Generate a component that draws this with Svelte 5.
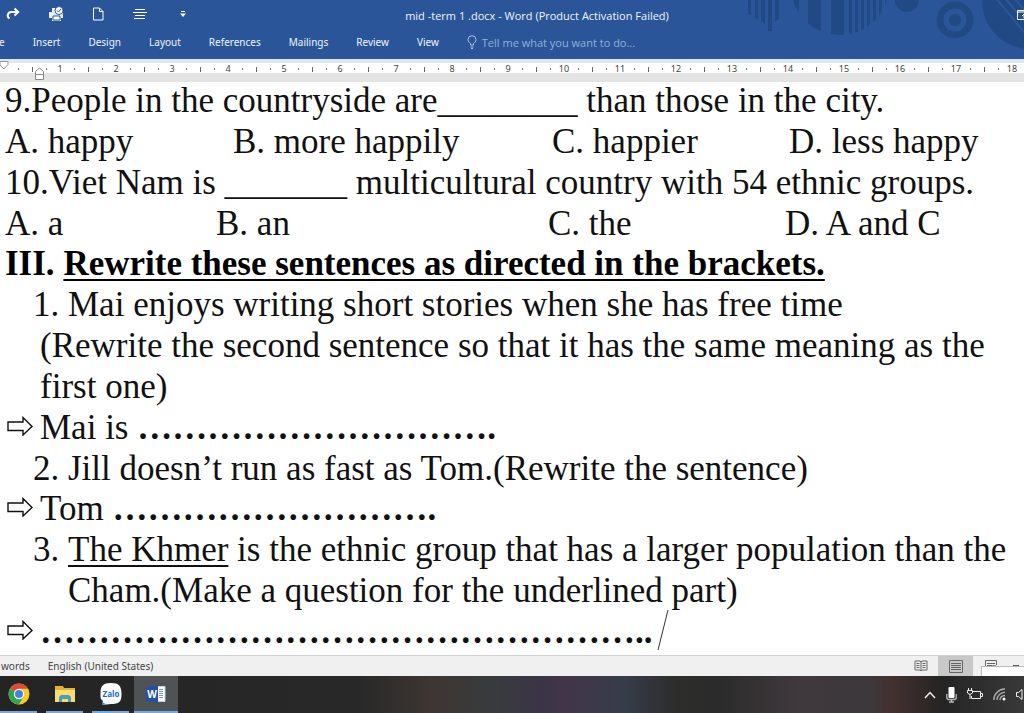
<script lang="ts">
    const tabs: string[] = ["e", "Insert", "Design", "Layout", "References", "Mailings", "Review", "View"];
    const running: string[] = ["Google Chrome", "File Explorer", "Zalo", "Word"];

    // quarter marks of the ruler: dot, bar, dot, number
    let marks: string[] = [];
    for (let i = 1; i <= 18; i++) {
        marks.push("dot", "bar", "dot", i.toString());
    }

    // dotted line to write an answer on
    const dots = (ellipses: number, periods: number): string => {
        return "…".repeat(ellipses) + ".".repeat(periods);
    }

    let search: string = "";
    let activeView: string = "print";
</script>

<div class="window">
    <header>
        <svg class="pattern" width="284" height="59" viewBox="740 0 284 59" aria-hidden="true">
            <defs>
                <clipPath id="disc"><circle cx="840" cy="-14" r="49" /></clipPath>
                <clipPath id="bigDisc"><circle cx="1030" cy="1" r="48" /></clipPath>
            </defs>
            <g fill="#214a85">
                <path d="M748 0h3v15h-3zM755 0h3v20l-3-2zM761 0h4v24l-4-3zM768 0h4v31h-4zM775 0h4v19l-4 3z" />
                <g clip-path="url(#disc)">
                    <path d="M791 0h8v16h-8zM808 0h13v40h-13zM831 0h13v40h-13zM849 0h3v40h-3zM855 0h3v40h-3zM861 0h3v40h-3zM867 0h3v40h-3zM873 0h3v40h-3zM879 0h3v40h-3zM885 0h3v40h-3z" />
                </g>
                <circle cx="907" cy="0" r="12" />
                <circle cx="1030" cy="1" r="48" />
            </g>
            <circle cx="955" cy="20" r="15" fill="none" stroke="#214a85" stroke-width="7" />
            <circle cx="955" cy="20" r="6" fill="#214a85" />
            <g clip-path="url(#bigDisc)" stroke="#2b5797" stroke-width="2">
                <path d="M994 -4l40 48M1000 -8l40 48M1006 -12l40 48" />
            </g>
        </svg>

        <div class="title-row">
            <div class="quick">
                <button aria-label="Redo">
                    <svg width="14" height="14" viewBox="0 0 14 14"><path d="M12 5H5.500a3.500 3.500 0 0 0-2 6.500M8.500 1.500L12.200 5 8.500 8.500" fill="none" stroke="#fff" stroke-width="2" /></svg>
                </button>
                <button aria-label="Print preview">
                    <svg width="16" height="16" viewBox="0 0 16 16">
                        <path d="M1 6h3V2h5v4h6v6h-2v3H4v-3H1z" fill="#e8eef7" />
                        <path d="M5 10h7v4H5z" fill="#fff" stroke="#2a5699" />
                        <circle cx="11" cy="4.500" r="4" fill="#fff" stroke="#2a5699" />
                        <path d="M9 4.500l1.500 1.500L13 3" fill="none" stroke="#2a5699" />
                    </svg>
                </button>
                <button aria-label="New document">
                    <svg width="12" height="14" viewBox="0 0 12 14"><path d="M1.500 1h6l3.500 3.500V13H1.500zM7.500 1v3.500H11" fill="none" stroke="#fff" /></svg>
                </button>
                <button aria-label="Center">
                    <svg width="14" height="12" viewBox="0 0 14 12"><path d="M2 1.500h10M0 4.500h14M2 7.500h10M1 10.500h11" stroke="#fff" /></svg>
                </button>
                <button aria-label="Customize toolbar">
                    <svg width="6" height="6" viewBox="0 0 6 6"><path d="M1 .5h4" stroke="#fff" /><path d="M0 2.500h6L3 6z" fill="#fff" /></svg>
                </button>
            </div>
            <h1>mid -term 1 .docx - Word (Product Activation Failed)</h1>
            <div class="controls">
                <button aria-label="Ribbon display options">
                    <svg width="14" height="10" viewBox="0 0 14 10"><path d="M.5.5h13v9H.5zM.5 2h13M7 8V4M5 6l2-2 2 2" fill="none" stroke="#fff" /></svg>
                </button>
            </div>
        </div>

        <nav>
            {#each tabs as tab}
                <button aria-label={tab === "e" ? "Home" : tab}>{tab}</button>
            {/each}
            <label class="tell">
                <svg width="10" height="14" viewBox="0 0 10 14"><path d="M3.500 10V8.500C2 7.500 1 6.500 1 4.700a4 4 0 0 1 8 0c0 1.800-1 2.800-2.500 3.800V10zM3.500 12h3M4 13.500h2" fill="none" stroke="#a9c0e2" /></svg>
                <input type="text" aria-label="Tell me" placeholder="Tell me what you want to do..." bind:value={search} />
            </label>
        </nav>
    </header>

    <div class="ruler" aria-hidden="true">
        <div class="scale">
            {#each marks as mark}
                {#if mark === "dot" || mark === "bar"}
                    <span><i class={mark}></i></span>
                {:else}
                    <span>{mark}</span>
                {/if}
            {/each}
        </div>
        <svg class="indent" width="46" height="20" viewBox="0 0 46 20">
            <path d="M0 .5h8v3L4 8 0 4z" fill="#fff" stroke="#999" />
            <path d="M35.500 18.500v-8L39.500 7l4 3.500v8zM35.500 13.500h8" fill="#fff" stroke="#888" />
        </svg>
    </div>

    <main>
        <p>9.People in the countryside are________ than those in the city.</p>
        <p class="options first">
            <span>A. happy</span><span>B. more happily</span><span>C. happier</span><span>D. less happy</span>
        </p>
        <p>10.Viet Nam is _______ multicultural country with 54 ethnic groups.</p>
        <p class="options second">
            <span>A. a</span><span>B. an</span><span>C. the</span><span>D. A and C</span>
        </p>
        <h2>III. <u>Rewrite these sentences as directed in the brackets.</u></h2>
        <p class="item"><span>1.</span>Mai enjoys writing short stories when she has free time</p>
        <p class="note">(Rewrite the second sentence so that it has the same meaning as the</p>
        <p class="note">first one)</p>
        <p class="answer">{@render arrow()}Mai is <b>{dots(10, 1)}</b></p>
        <p class="item"><span>2.</span>Jill doesn’t run as fast as Tom.(Rewrite the sentence)</p>
        <p class="answer">{@render arrow()}Tom <b>{dots(9, 1)}</b></p>
        <p class="item"><span>3.</span><u>The Khmer</u> is the ethnic group that has a larger population than the</p>
        <p class="item"><span></span>Cham.(Make a question for the underlined part)</p>
        <p class="answer">
            {@render arrow()}<b>{dots(17, 2)}</b>
            <svg class="caret" width="12" height="42" viewBox="0 0 12 42"><path d="M11 1L1 41" stroke="#333" /></svg>
        </p>
    </main>

    <div class="status">
        <span>words</span>
        <span>English (United States)</span>
        <div class="views">
            <button aria-label="Read mode" class:active={activeView === "read"} on:click={() => (activeView = "read")}>
                <svg width="14" height="12" viewBox="0 0 14 12"><path d="M1 1h5l1 1 1-1h5v9H8l-1 1-1-1H1zM7 2v9M2.500 3.500h3M2.500 5.500h3M2.500 7.500h3M8.500 3.500h3M8.500 5.500h3M8.500 7.500h3" fill="none" stroke="#666" /></svg>
            </button>
            <button aria-label="Print layout" class:active={activeView === "print"} on:click={() => (activeView = "print")}>
                <svg width="14" height="13" viewBox="0 0 14 13"><path d="M.5.5h13v12H.5zM2 3.500h10M2 5.500h10M2 7.500h10M2 9.500h10" fill="none" stroke="#666" /></svg>
            </button>
            <button aria-label="Web layout" class:active={activeView === "web"} on:click={() => (activeView = "web")}>
                <svg width="14" height="12" viewBox="0 0 14 12"><path d="M12.500 5V.5H1.500v10h5M3 3.500h8M3 5.500h5" fill="none" stroke="#666" /><circle cx="10" cy="8" r="3" fill="#777" /></svg>
            </button>
            <button class="zoom-out" aria-label="Zoom out"><i></i></button>
        </div>
        <div class="popup"></div>
    </div>

    <footer>
        {#each running as app}
            <button class="app" class:focused={app === "Word"} aria-label={app}>
                {#if app === "Google Chrome"}
                    <svg width="22" height="22" viewBox="0 0 22 22">
                        <circle cx="11" cy="11" r="10.500" fill="#f9c928" />
                        <path d="M11 11L1.900 5.800A10.500 10.500 0 0 1 20.100 5.800H11z" fill="#df4b3b" />
                        <path d="M11 11L1.900 5.800A10.500 10.500 0 0 0 11 21.500L15.500 13.500z" fill="#32a350" />
                        <circle cx="11" cy="11" r="5.200" fill="#fff" />
                        <circle cx="11" cy="11" r="4" fill="#4285d8" />
                    </svg>
                {:else if app === "File Explorer"}
                    <svg width="20" height="18" viewBox="0 0 20 18">
                        <path d="M0 1h8l1 2h11v14H0z" fill="#e8b02f" />
                        <path d="M0 5h20v12H0z" fill="#fbdc74" />
                        <path d="M4 17v-5l2-2h8l2 2v5h-3v-3H7v3z" fill="#4a9fbd" />
                    </svg>
                {:else if app === "Zalo"}
                    <svg width="22" height="22" viewBox="0 0 22 22">
                        <path d="M11 0C19 0 21.500 3 21.500 11S19 21 11 21L2 22l1-4C0 16 .5 14 .5 10 .5 3 3 0 11 0z" fill="#fff" />
                        <path d="M1 16l2 2-1 4 5-1c-3 0-5-2-6-5z" fill="#2079e8" />
                        <text x="11" y="14" text-anchor="middle" font-size="8" font-weight="700" font-family="Open Sans, sans-serif" fill="#1769cf">Zalo</text>
                    </svg>
                {:else}
                    <svg width="20" height="18" viewBox="0 0 20 18">
                        <path d="M10 1.500h9v15h-9z" fill="#fff" stroke="#c4d2e8" />
                        <path d="M13 4.500h4M13 6.500h4M13 8.500h4M13 10.500h4M13 12.500h4" stroke="#7c96c4" />
                        <path d="M0 2l12-2v18L0 16z" fill="#2450a0" />
                        <text x="6" y="13" text-anchor="middle" font-size="10" font-weight="700" font-family="Open Sans, sans-serif" fill="#fff">W</text>
                    </svg>
                {/if}
            </button>
        {/each}
        <div class="tray">
            <button aria-label="Show hidden icons">
                <svg width="12" height="8" viewBox="0 0 12 8"><path d="M1 7l5-5.500L11 7" fill="none" stroke="#eee" stroke-width="1.500" /></svg>
            </button>
            <button aria-label="Microphone">
                <svg width="11" height="16" viewBox="0 0 11 16"><rect x="2.500" width="6" height="11" rx="1" fill="#fff" /><path d="M.8 7v3.500q0 2 2 2h5.400q2 0 2-2V7M5.500 12.500V15M3 15h5" fill="none" stroke="#bbb" stroke-width="1.300" /></svg>
            </button>
            <button aria-label="Battery">
                <svg width="16" height="13" viewBox="0 0 16 13"><path d="M6 3.500h7.500v7H4.500V8M14 5.500h1.500v3H14M1.500 0v3M4.500 0v3M.5 2.500h5V5L3 6.500.5 5zM3 6v5" fill="none" stroke="#eee" /></svg>
            </button>
            <button aria-label="Network">
                <svg width="13" height="13" viewBox="0 0 13 13"><path d="M.8 12A11 11 0 0 1 12 1M3.800 12A8.500 8.500 0 0 1 12 4.200M6.800 12A5.500 5.500 0 0 1 12 7.500" fill="none" stroke="#aaa" stroke-width="1.400" /><circle cx="11" cy="11" r="1.500" fill="#fff" /></svg>
            </button>
            <button aria-label="Volume">
                <svg width="14" height="13" viewBox="0 0 14 13"><path d="M.5 4.500h2l3.500-3v10l-3.500-3h-2zM8 4l5 5M13 4L8 9" fill="none" stroke="#eee" /></svg>
            </button>
        </div>
    </footer>
</div>

{#snippet arrow()}
    <svg class="arrow" width="27" height="20" viewBox="0 0 27 20" aria-hidden="true">
        <path d="M1 6h15V1.500L25 10.500 16 19v-4.500H1z" fill="none" stroke="#111" stroke-width="1.400" />
    </svg>
{/snippet}

<style>
    :global(body) {
        margin: 0;
    }

    .window {
        display: flex;
        flex-direction: column;
        min-height: 100vh;
        overflow: hidden;
        background: #fff;
        font-family: "Noto Sans", "Open Sans", sans-serif;
        font-size: 10px;
    }

    button {
        display: flex;
        align-items: center;
        justify-content: center;
        padding: 0;
        border: none;
        background: transparent;
        color: inherit;
        font: inherit;
    }

    svg {
        flex: none;
    }

    header {
        position: relative;
        height: 59px;
        background: #2a5699;
        color: #f0f4fa;
    }

    .pattern {
        position: absolute;
        top: 0;
        right: 0;
    }

    .title-row {
        position: relative;
        display: flex;
        height: 30px;
    }

    .quick {
        display: flex;
        width: 212px;
        margin-left: -8px;
    }

    .quick button {
        flex: 1;
        height: 28px;
    }

    h1 {
        flex: 1;
        margin: 0;
        font-family: "Open Sans", "Noto Sans", sans-serif;
        font-size: 11px;
        font-weight: 400;
        line-height: 32px;
        text-align: center;
        white-space: nowrap;
    }

    .controls {
        display: flex;
        justify-content: flex-end;
        width: 161px;
        margin-right: -7px;
    }

    nav {
        position: relative;
        display: flex;
        align-items: center;
        gap: 28px;
        height: 24px;
        margin-left: -1px;
    }

    .tell {
        display: flex;
        flex: 1;
        align-items: center;
        gap: 5px;
    }

    .tell input {
        flex: 1;
        padding: 0;
        border: none;
        outline: none;
        background: transparent;
        color: #fff;
        font-family: "Open Sans", "Noto Sans", sans-serif;
        font-size: 11px;
    }

    .tell input::placeholder {
        color: #93afd8;
        opacity: 1;
    }

    .ruler {
        position: relative;
        height: 10px;
        border-top: 4px solid #dfe7ef;
        border-bottom: 9px solid #e4e4e4;
        background: #fff;
        color: #444;
        font-size: 9px;
        line-height: 12px;
    }

    .scale {
        display: flex;
        height: 12px;
        padding-left: 11px;
        overflow: hidden;
    }

    .scale span {
        display: flex;
        flex: none;
        align-items: center;
        justify-content: center;
        width: 14px;
    }

    .dot {
        width: 1px;
        height: 2px;
        background: #777;
    }

    .bar {
        width: 1px;
        height: 5px;
        background: #666;
    }

    .indent {
        position: absolute;
        top: -2px;
        left: 0;
    }

    main {
        display: flex;
        flex: 1;
        flex-direction: column;
        justify-content: space-between;
        padding: 0 0 4px 5px;
        color: #111;
        font-family: "Liberation Serif", "Times New Roman", serif;
        font-size: 35px;
        line-height: 38px;
        white-space: nowrap;
    }

    p,
    h2 {
        margin: 0;
        font-size: 35px;
    }

    h2 {
        color: #000;
    }

    u {
        text-decoration-thickness: 2px;
        text-underline-offset: 4px;
    }

    .options {
        display: grid;
    }

    .first {
        grid-template-columns: 228fr 319fr 237fr 235fr;
    }

    .second {
        grid-template-columns: 211fr 332fr 237fr 239fr;
    }

    .item {
        padding-left: 28px;
    }

    .item span {
        display: inline-block;
        width: 35px;
    }

    .note {
        padding-left: 35px;
    }

    .answer {
        display: flex;
        align-items: center;
        white-space: pre;
    }

    .arrow {
        margin: 0 6px 4px 2px;
    }

    .caret {
        margin: -4px 0 0 4px;
    }

    .status {
        position: relative;
        display: flex;
        align-items: center;
        gap: 18px;
        height: 20px;
        padding-left: 1px;
        border-top: 1px solid #d0d0d0;
        background: #f0f0f0;
        color: #444;
    }

    .views {
        display: flex;
        align-self: stretch;
        margin-left: auto;
    }

    .views button {
        width: 35px;
    }

    .views .active {
        background: #c8c8c8;
    }

    .views .zoom-out {
        width: 16px;
    }

    .zoom-out i {
        width: 6px;
        height: 2px;
        background: #555;
    }

    .popup {
        position: absolute;
        right: 0;
        bottom: 0;
        width: 42px;
        height: 9px;
        border-top: 1px solid #bbb;
        border-left: 1px solid #bbb;
        background: #fff;
    }

    footer {
        display: flex;
        height: 37px;
        background: linear-gradient(90deg, #242424 0%, #282828 35%, #3d3632 42%, #383b3d 48%, #3b3447 53%, #42354a 55%, #363c49 61%, #2d2d2c 66%, #2b2b2b 70%, #3f393d 78%, #3d383b 85%, #44312f 87%, #252424 92%, #393939 100%);
    }

    .app {
        width: 37px;
        margin-right: 9px;
        border-bottom: 2px solid #76a9dc;
    }

    .app.focused {
        width: 44px;
        margin: 0 0 0 -4px;
        background: #505356;
    }

    .tray {
        display: flex;
        align-items: center;
        gap: 10px;
        margin-left: auto;
        margin-right: -6px;
    }
</style>
